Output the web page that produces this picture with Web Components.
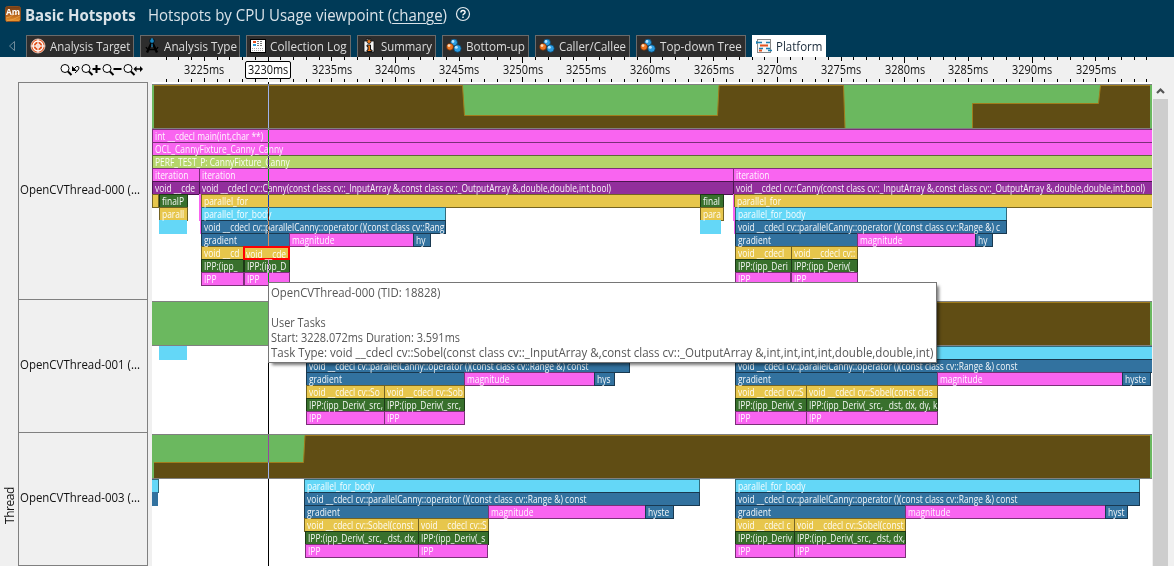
<!DOCTYPE html>
<html lang="en">
<head>
<meta charset="utf-8">
<title>Basic Hotspots</title>
<style>
html,body{margin:0;height:100%;overflow:hidden;background:#f0f0f0}
</style>
</head>
<body>
<profiler-app></profiler-app>
<script>
const FONT = '"Open Sans","Noto Sans",sans-serif';

/* Text squeezed horizontally to an exact width. */
class FitText extends HTMLElement {
  connectedCallback() {
    const root = this.attachShadow({mode: 'open'});
    root.innerHTML = `<style>:host{display:block;white-space:pre;width:${this.getAttribute('w')}px;flex:none}
      span{display:inline-block;transform-origin:0 50%}</style><span><slot></slot></span>`;
    const s = root.querySelector('span');
    s.style.transform = `scaleX(${this.getAttribute('w') / s.offsetWidth})`;
  }
}
customElements.define('fit-text', FitText);

const ICONS = {
  target: `<circle cx="8" cy="8" r="7" fill="#e2541f"/><circle cx="8" cy="8" r="5" fill="none" stroke="#fff" stroke-width="1.3"/><circle cx="8" cy="8" r="2" fill="none" stroke="#fff"/><path d="M8 1v14M1 8h14" stroke="#fff"/><circle cx="8" cy="8" r="7" fill="none" stroke="#f6ddd0" stroke-width=".8"/>`,
  compass: `<path d="M7.5 5 3 14.5M8.5 5 13 14.5" stroke="#000" stroke-width="2.4"/><path d="M2 9q1 2.5 3 2.500h6q2 0 3-2.500" fill="none" stroke="#000" stroke-width="1.300"/><circle cx="8" cy="3" r="2.400" fill="#1686c2" stroke="#06151e"/><path d="M8 0v2M8 6v3" stroke="#1fa4e8"/>`,
  log: `<rect x=".5" y="1.500" width="15" height="13" fill="#fff" stroke="#000"/><path d="M3 4h3" stroke="#e84e1c" stroke-width="2"/><path d="M3 7h3" stroke="#2a9ad6" stroke-width="2"/><path d="M7 3.500h6M7 5.500h6M7 7.500h6" stroke="#777" stroke-dasharray="2 1"/><path d="M2 10.500h12M2 12.500h12" stroke="#aaa" stroke-dasharray="1 1"/>`,
  info: `<path d="M3 3h3l-1-2h5l-1 2h4v11H3z" fill="#f5f5f5" stroke="#111" stroke-width=".8"/><circle cx="8" cy="3.500" r="2" fill="#f07a1c" stroke="#111" stroke-width=".8"/><path d="M6 7h3.500v5H11v1.500H6V12h1V8.500H6z" fill="#f07a1c" stroke="#111"/>`,
  balls: `<circle cx="8" cy="4.500" r="3.400" fill="#2c9ce0" stroke="#0b4469" stroke-width=".7"/><circle cx="11.500" cy="10.500" r="3.700" fill="#2c9ce0" stroke="#0b4469" stroke-width=".7"/><circle cx="4" cy="8.800" r="3.400" fill="#f07822" stroke="#6b2c08" stroke-width=".7"/><circle cx="7" cy="3.500" r="1.400" fill="#b9e5ff"/><circle cx="10.300" cy="9.300" r="1.500" fill="#b9e5ff"/><circle cx="3" cy="7.600" r="1.400" fill="#ffe0c0"/>`,
  platform: `<rect x="1.500" y="1.500" width="13" height="13" fill="#f7f7f7" stroke="#888"/><path d="M0 4.500h6M0 3v3M3 10.500h4M10 10.500h4M12 12.500h4M10 4.500h4" stroke="#1b7fb0" stroke-width="1.600"/><path d="M4 7.500h8M3 12.500h3" stroke="#e5531c" stroke-width="1.800"/>`
};

class TabItem extends HTMLElement {
  connectedCallback() {
    const on = this.hasAttribute('active');
    this.attachShadow({mode: 'open'}).innerHTML = `<style>
      :host{display:flex;box-sizing:border-box;width:${this.getAttribute('width')}px;height:22px;
        align-items:center;padding-left:3px;margin-right:${this.getAttribute('gap') || 6}px;flex:none;
        background:${on ? '#fff' : '#2d2d2d'};color:${on ? '#1b2b3a' : '#dcdcdc'};
        border:1px solid ${on ? '#fff' : '#6a6a6a'};border-bottom:0;font:12.5px/20px ${FONT}}
      svg{width:16px;height:16px;margin-right:4px;flex:none;margin-top:-1px}
      </style><svg viewBox="0 0 16 16">${ICONS[this.getAttribute('icon')]}</svg>
      <fit-text w="${this.getAttribute('tw')}">${this.getAttribute('label')}</fit-text>`;
  }
}
customElements.define('tab-item', TabItem);

class AppHeader extends HTMLElement {
  connectedCallback() {
    const tabs = [['target','Analysis Target',108,80],['compass','Analysis Type',100,73],['log','Collection Log',105,77],
      ['info','Summary',79,51],['balls','Bottom-up',87,59],['balls','Caller/Callee',95,67],['balls','Top-down Tree',110,82]];
    this.attachShadow({mode: 'open'}).innerHTML = `<style>
      :host{display:flex;flex-direction:column;height:57px;background:#003a57;color:#d9e2e8;font:16px/31px ${FONT}}
      .title{display:flex;height:35px;padding-left:5px;align-items:flex-start}
      .logo{width:16px;height:16px;margin:6px 4px 0 0}
      b{display:block;font-size:16px;margin-right:12px}
      .help{width:16px;height:16px;margin:6px 0 0 8px}
      u{text-underline-offset:2px;text-decoration-thickness:1px}
      nav{display:flex;height:22px;align-items:flex-start}
      .back{width:26px;height:22px;flex:none}
      </style>
      <div class="title">
        <svg class="logo" viewBox="0 0 16 16"><defs><linearGradient id="g" x2="0" y2="1"><stop stop-color="#6f3d18"/><stop offset=".55" stop-color="#b4611c"/><stop offset="1" stop-color="#f09a2e"/></linearGradient></defs>
          <rect x=".5" y=".5" width="15" height="15" rx="2" fill="url(#g)" stroke="#8a4c1c"/><path d="M1 12q5-1 7-3t7-2M1 15q8-1 14-5" stroke="#e9a04a" fill="none" stroke-width=".8"/>
          <text x="1" y="9" font-family="Open Sans" font-weight="700" font-size="9.500" fill="#fff" textLength="14" lengthAdjust="spacingAndGlyphs">Am</text></svg>
        <b><fit-text w="111">Basic Hotspots</fit-text></b>
        <fit-text w="299">Hotspots by CPU Usage viewpoint (<u>change</u>)</fit-text>
        <svg class="help" viewBox="0 0 16 16"><circle cx="8" cy="8" r="6.500" fill="none" stroke="#e4ebef" stroke-width="1.200"/><path d="M5.900 6.500q0-2 2.100-2t2.100 1.800q0 1-1.100 1.600T8 9.300M8 10.500V12" fill="none" stroke="#fff" stroke-width="1.400"/></svg>
      </div>
      <nav><svg class="back" viewBox="0 0 26 22"><path d="M14.500 6.500v9l-5-4.500z" fill="none" stroke="#6f8b9b"/></svg>
      ${tabs.map(t => `<tab-item icon="${t[0]}" label="${t[1]}" width="${t[2]}" tw="${t[3]}"></tab-item>`).join('')}
      <tab-item active icon="platform" label="Platform" width="74" tw="46"></tab-item></nav>`;
  }
}
customElements.define('app-header', AppHeader);

class TimeRuler extends HTMLElement {
  connectedCallback() {
    let ticks = '';
    for (let k = -3; k <= 74; k++) {
      const x = Math.floor(204.4 + k * 12.735) - 152, ms = 3225 + k;
      const h = ms % 10 === 0 ? 6 : ms % 5 === 0 ? 4 : 3;
      ticks += `M${x + .5} 0v${h}M${x + .5} 25v${-Math.min(h, 5)}`;
    }
    let labels = '';
    for (let t = 3225; t <= 3295; t += 5)
      labels += `<div><span class="${t === 3230 ? 'cur' : ''}"><fit-text w="40">${t}ms</fit-text></span></div>`;
    const lens = '<circle cx="5" cy="5.500" r="4" fill="#fafafa" stroke="#000"/><path d="M8 8.500 11.500 12" stroke="#000" stroke-width="2"/>';
    const tail = ['<path d="M12 3v5h5z"/><path d="M13 7l3.500-3.500q2.500-.5 2.500 1.500T15 10" fill="none" stroke="#000"/>',
      '<path d="M11.500 6h8M15.500 2v8" stroke="#000" stroke-width="2"/>',
      '<path d="M11.500 6h8" stroke="#000" stroke-width="2"/>',
      '<path d="M12 6h7" stroke="#000" stroke-width="1.500"/><path d="M10.500 6l3-3v6zM20 6l-3-3v6z"/>'];
    this.attachShadow({mode: 'open'}).innerHTML = `<style>
      :host{display:flex;height:25px;background:#f0f0f0;color:#111;font:12px/16px ${FONT}}
      .tools{width:92px;padding-left:60px;display:flex;flex:none;padding-top:6px}
      .tools svg{width:20px;height:14px;margin-right:1px}
      .scale{width:1000px;display:grid}
      .scale>*{grid-area:1/1}
      .scale svg{width:1000px;height:25px}
      .labels{display:flex;padding-left:20.500px;align-items:center;height:25px}
      .labels div{width:63.680px;flex:none;display:flex;justify-content:center}
      span{padding:0 2px;border:1px solid transparent;border-radius:2px}
      .cur{background:#fff;border-color:#000}
      </style><div class="tools">${tail.map(t => `<svg viewBox="0 0 20 14">${lens}${t}</svg>`).join('')}</div>
      <div class="scale"><svg shape-rendering="crispEdges"><path d="${ticks}" stroke="#000"/></svg><div class="labels">${labels}</div></div>`;
  }
}
customElements.define('time-ruler', TimeRuler);

const COLORS = {
  p: ['#f964f0', '#7b3078'], l: ['#b5d56a', '#5b6b36'], y: ['#e7c64c', '#746322'], v: ['#922e9c', '#4a164f'],
  c: ['#64d7f7', '#326c7c'], b: ['#32729f', '#193950'], g: ['#38702c', '#1c3816']
};

/* One task: colour key, optional label; plain ones have no frame, the selected one is outlined. */
class TaskBar extends HTMLElement {
  connectedCallback() {
    const [fill, edge] = COLORS[this.getAttribute('kind')];
    const plain = this.hasAttribute('plain'), sel = this.hasAttribute('selected');
    this.attachShadow({mode: 'open'}).innerHTML = `<style>
      :host{display:block;box-sizing:border-box;flex:none;height:14px;background:${fill};color:#fffffff0;
        ${plain ? '' : `border:1px solid ${edge};padding-left:2px;`}
        ${sel ? 'border:2px solid #f00;padding-left:1px;position:relative;z-index:1;' : ''}
        font:10px/12px ${FONT};white-space:pre}
      span{display:inline-block;transform:scaleX(var(--squeeze));transform-origin:0 50%;${sel ? 'margin-top:-1px;' : ''}}
      </style><span><slot></slot></span>`;
  }
}
customElements.define('task-bar', TaskBar);

class TrackLane extends HTMLElement {
  connectedCallback() {
    const d = TRACKS[this.getAttribute('index')];
    const rows = d.rows.map(r => {
      let end = 152;
      return '<div class="row">' + r.map(([a, b, k, text = '', flag = '']) => {
        const m = a - end; end = b;
        const wide = text === CANNY ? '--squeeze:var(--squeeze-long);' : '';
        return `<task-bar kind="${k}" ${flag} style="${wide}width:${b - a}px;margin-left:${m}px">${text.replace(/&/g, '&amp;')}</task-bar>`;
      }).join('') + '</div>';
    }).join('');
    this.attachShadow({mode: 'open'}).innerHTML = `<style>
      :host{display:block;height:${d.height}px;width:1000px}
      .cpu{box-sizing:border-box;height:45px;border-top:1px solid #808080;border-bottom:1px solid #808080;background:#6bb85f}
      svg{display:block;width:1000px;height:43px}
      .row{display:flex;height:13px}
      </style><div class="cpu"><svg><path d="${d.area}" fill="#604d14"/><path d="${d.edge || d.area}" fill="none" stroke="#a07c1c"/></svg></div>${rows}`;
  }
}
const CANNY = 'void __cdecl cv::Canny(const class cv::_InputArray &,const class cv::_OutputArray &,double,double,int,bool)';
const OP = 'void __cdecl cv::parallelCanny::operator ()(const class cv::Range &) const';
const TRACKS = [
  {height: 217, area: 'M2 43V.5H310.500L312.500 30.500H565.500L567 .5H691.500L693 43ZM820.500 43V18.500H946.500L948.500 .5H998V43Z',
   edge: 'M2 .5H310.500L312.500 30.500H565.500L567 .5H691.500L693 43M820.500 43V18.500H946.500L948.500 .5H998',
   rows: [
    [[152,1153,'p','int __cdecl main(int,char **)']],
    [[152,1153,'p','OCL_CannyFixture_Canny_Canny']],
    [[152,1153,'l','PERF_TEST_P: CannyFixture_Canny']],
    [[152,200,'p','iteration'],[199,734,'p','iteration'],[733,1153,'p','iteration']],
    [[152,200,'v','void __cde'],[199,734,'v',CANNY],[733,1153,'v',CANNY]],
    [[152,159,'y'],[159,188,'g','finalP'],[199,201,'p','','plain'],[201,701,'y','parallel_for'],[700,724,'g','final'],[733,734,'p','','plain'],[734,1153,'y','parallel_for']],
    [[159,188,'y','parall'],[199,201,'p','','plain'],[201,446,'c','parallel_for_body'],[700,724,'y','para'],[733,735,'p','','plain'],[735,1007,'c','parallel_for_body']],
    [[159,187,'c','','plain'],[200,201,'p','','plain'],[201,446,'b','void __cdecl cv::parallelCanny::operator ()(const class cv::Rang'],[700,721,'c','','plain'],[734,735,'p','','plain'],[735,1007,'b','void __cdecl cv::parallelCanny::operator ()(const class cv::Range &) c']],
    [[201,290,'b','gradient'],[289,414,'p','magnitude'],[413,431,'b','hy'],[735,858,'b','gradient'],[857,976,'p','magnitude'],[975,993,'b','hy']],
    [[201,244,'y','void __cd'],[243,290,'y','void __cde','selected'],[735,792,'y','void __cdecl'],[791,858,'y','void __cdecl cv::']],
    [[201,244,'g','IPP:(ipp_'],[244,290,'g','IPP:(ipp_D'],[735,792,'g','IPP:(ipp_Deri'],[791,858,'g','IPP:(ipp_Deriv(_']],
    [[201,244,'p','IPP'],[244,290,'p','IPP'],[735,791,'p','IPP'],[791,858,'p','IPP']]
   ]},
  {height: 133, area: 'M154 43V.5H998V43Z', edge: 'M154 .5H998',
   rows: [
    [[159,187,'c','','plain'],[306,630,'c'],[735,1153,'c']],
    [[306,630,'b',OP],[735,1153,'b',OP]],
    [[306,465,'b','gradient'],[464,595,'p','magnitude'],[594,615,'b','hys'],[735,938,'b','gradient'],[937,1123,'p','magnitude'],[1122,1151,'b','hyste']],
    [[306,385,'y','void __cdecl cv::So'],[384,465,'y','void __cdecl cv::Sob'],[735,807,'y','void __cdecl cv::S'],[806,938,'y','void __cdecl cv::Sobel(const clas']],
    [[306,385,'g','IPP:(ipp_Deriv(_src,'],[384,465,'g','IPP:(ipp_Deriv(_src,'],[735,807,'g','IPP:(ipp_Deriv(_s'],[806,938,'g','IPP:(ipp_Deriv(_src, _dst, dx, dy, k']],
    [[306,385,'p','IPP'],[384,465,'p','IPP'],[735,807,'p','IPP'],[806,938,'p','IPP']]
   ]},
  {height: 132, area: 'M2 43V27.500H151.500L153 .5H998V43Z', edge: 'M2 27.500H151.500L153 .5H998',
   rows: [
    [[151,159,'c'],[304,700,'c','parallel_for_body'],[735,1140,'c','parallel_for_body']],
    [[152,158,'b','','plain'],[304,700,'b',OP],[735,1140,'b',OP]],
    [[304,489,'b','gradient'],[488,646,'p','magnitude'],[645,674,'b','hyste'],[735,906,'b','gradient'],[905,1106,'p','magnitude'],[1105,1128,'b','hyst']],
    [[304,419,'y','void __cdecl cv::Sobel(const'],[418,489,'y','void __cdecl cv::S'],[735,795,'y','void __cdecl c'],[794,906,'y','void __cdecl cv::Sobel(const']],
    [[305,419,'g','IPP:(ipp_Deriv(_src, _dst, dx,'],[418,489,'g','IPP:(ipp_Deriv(_s'],[735,795,'g','IPP:(ipp_Deriv'],[794,906,'g','IPP:(ipp_Deriv(_src, _dst, dx,']],
    [[305,419,'p','IPP'],[418,488,'p','IPP'],[735,795,'p','IPP'],[794,906,'p','IPP']]
   ]}
];
customElements.define('track-lane', TrackLane);

class ThreadNames extends HTMLElement {
  connectedCallback() {
    this.attachShadow({mode: 'open'}).innerHTML = `<style>
      :host{display:flex;width:152px;flex:none;height:484px;background:#f0f0f0;color:#111;font:12.5px/16px ${FONT}}
      .axis{width:18px;display:flex;flex-direction:column;justify-content:flex-end;height:442px}
      .axis div{writing-mode:vertical-rl;transform:rotate(180deg);line-height:18px;font-size:12px;letter-spacing:-.45px;height:36px;margin-left:1px}
      .names{box-sizing:border-box;width:130px;height:484px;border:1px solid #808080;display:flex;flex-direction:column}
      .names div{box-sizing:border-box;display:flex;align-items:center;padding:0 0 2px 1px;border-bottom:1px solid #808080}
      .names div:last-child{border:0}
      </style><div class="axis"><div>Thread</div></div><div class="names">
      ${[['000',217],['001',133],['003',132]].map(n => `<div style="height:${n[1]}px"><fit-text w="120">OpenCVThread-${n[0]} (...</fit-text></div>`).join('')}</div>`;
  }
}
customElements.define('thread-names', ThreadNames);

class ScrollBar extends HTMLElement {
  connectedCallback() {
    this.attachShadow({mode: 'open'}).innerHTML = `<style>
      :host{display:flex;flex-direction:column;width:15px;height:484px;margin-left:1px;background:#f0f0f0;flex:none}
      svg{width:15px;height:17px;flex:none}div{flex:1;background:#cdcdcd}
      </style><svg viewBox="0 0 15 17"><path d="M4 11 7.500 7.500 11 11" fill="none" stroke="#555" stroke-width="2.200"/></svg><div></div>`;
  }
}
customElements.define('scroll-bar', ScrollBar);

class TaskTip extends HTMLElement {
  connectedCallback() {
    this.attachShadow({mode: 'open'}).innerHTML = `<style>
      :host{display:block;box-sizing:border-box;width:669px;height:81px;padding:2px 2px;background:#fff;border:1px solid #767676;
        box-shadow:3px 3px 3px -1px #0008;color:#575757;font:12.5px/15px ${FONT}}
      fit-text{height:15px}
      </style><fit-text w="169">OpenCVThread-000 (TID: 18828)</fit-text><fit-text w="10"> </fit-text>
      <fit-text w="55">User Tasks</fit-text><fit-text w="189">Start: 3228.072ms Duration: 3.591ms</fit-text>
      <fit-text w="662">Task Type: void __cdecl cv::Sobel(const class cv::_InputArray &amp;,const class cv::_OutputArray &amp;,int,int,int,int,double,double,int)</fit-text>`;
  }
}
customElements.define('task-tip', TaskTip);

class ProfilerApp extends HTMLElement {
  connectedCallback() {
    const c = document.createElement('canvas').getContext('2d');
    c.font = `10px ${FONT}`;
    const k = 409 / c.measureText(CANNY).width;
    this.style.setProperty('--squeeze-long', k);
    this.style.setProperty('--squeeze', k * 1.012);
    this.attachShadow({mode: 'open'}).innerHTML = `<style>
      :host{display:block;position:relative;width:1174px;height:566px;overflow:hidden;background:#f0f0f0}
      main{display:flex;height:484px}
      .lanes{width:1000px;height:484px;background:#fff;padding-top:2px;box-sizing:border-box;overflow:hidden;flex:none}
      .cursor{position:absolute;left:268px;top:78px;width:1px;height:488px;background:#fff;mix-blend-mode:difference}
      task-tip{position:absolute;left:268px;top:282px}
      </style><app-header></app-header><time-ruler></time-ruler>
      <main><thread-names></thread-names>
      <div class="lanes"><track-lane index="0"></track-lane><track-lane index="1"></track-lane><track-lane index="2"></track-lane></div>
      <scroll-bar></scroll-bar></main><div class="cursor"></div><task-tip></task-tip>`;
  }
}
customElements.define('profiler-app', ProfilerApp);
</script>
</body>
</html>
